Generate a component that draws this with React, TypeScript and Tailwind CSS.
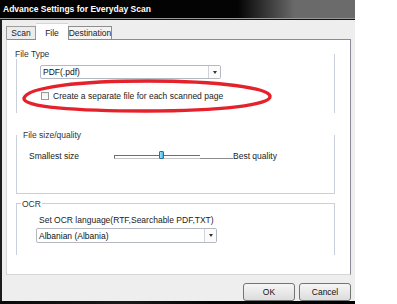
import React from "react";

const Select = ({ value, h }: { value: string; h: string }) => (
  <div
    className={`flex w-[181px] ${h} items-stretch rounded-[2px] border border-[#b4b8c0] bg-white`}
  >
    <div className="flex flex-1 items-center pl-[2px] text-[#111]">{value}</div>
    <div className="flex w-[12px] items-center justify-center border-l border-[#d0d3d8] bg-[#fbfbfb]">
      <div className="h-0 w-0 border-x-[2.5px] border-t-[3px] border-x-transparent border-t-[#333]" />
    </div>
  </div>
);

export default function App() {
  return (
    <div className="relative h-[304px] w-[397px] overflow-hidden bg-white font-['Liberation_Sans',Arial,sans-serif] text-[8.5px] leading-[10px] text-[#222]">
      <div className="flex h-[304px] w-[355px] flex-col">
        {/* title bar */}
        <div className="flex h-[18px] items-center bg-[linear-gradient(90deg,#000_0%,#040404_67%,#6a6a6a_83%,#6b6b6b_100%)] pl-[3px] font-bold text-white">
          Advance Settings for Everyday Scan
        </div>
        <div className="h-px bg-[#9a9a9a]" />
        <div className="h-px bg-[#111]" />

        {/* body */}
        <div className="flex flex-1 flex-col border-l-2 border-[#1c1c1c] bg-[#eeeeee] pl-[4px] pr-[4px]">
          {/* tabs */}
          <div className="mt-[3px] flex h-[16px] items-end">
            <div className="flex h-[13px] w-[30px] items-center justify-center border border-b-0 border-[#9c9c9c] bg-[#ececec] text-[#222]">
              Scan
            </div>
            <div className="relative z-10 -mb-px flex h-[17px] w-[32px] items-center justify-center border-t border-[#d6d6d6] bg-white pt-[1px] text-[#222]">
              File
            </div>
            <div className="flex h-[13px] w-[44px] items-center justify-center border border-b-0 border-[#8e8e8e] bg-[#f3f3f3] text-[#222]">
              Destination
            </div>
          </div>

          {/* panel */}
          <div className="h-[236px] w-[345px] border border-b-[#d6d6d6] border-l-[#d6d6d6] border-r-[#8a8a96] border-t-[#8a8a96] bg-white pl-[9px]">
            {/* File Type */}
            <div className="mt-[14px] flex h-[59px] w-[319px] flex-col border-x border-[#c9d0da]">
              <div className="-ml-[2px] -mt-[5px] h-[10px] self-start bg-white pr-[1px] text-[#333]">
                File Type
              </div>
              <div className="ml-[23px] mt-[6px]">
                <Select value="PDF(.pdf)" h="h-[14px]" />
              </div>
              <div className="ml-[24px] mt-[12px] flex h-[10px] items-center gap-[4px]">
                <div className="h-[8px] w-[8px] border border-[#9a9a9a] bg-[linear-gradient(#f0f0f0,#fff)]" />
                <span className="text-[#222]">Create a separate file for each scanned page</span>
              </div>
            </div>

            {/* File size/quality */}
            <div className="mt-[22px] flex h-[59px] w-[319px] flex-col border-x border-b border-[#c9d0da]">
              <div className="-mt-[5px] ml-[6px] h-[10px] text-[#333]">File size/quality</div>
              <div className="ml-[12px] mt-[11px] flex h-[10px] items-center">
                <span className="w-[85px]">Smallest size</span>
                <div className="relative flex h-[6px] items-end">
                  <div className="h-[4px] w-[86px] border-l border-t border-b border-l-[#707070] border-t-[#6e6e6e] border-b-[#c4c4c4]" />
                  <div className="h-px w-[33px] bg-[#8a8a8a]" />
                  <div className="absolute left-[45px] top-[-2px] h-[8px] w-[5px] rounded-[1px] border border-[#2f6f98] bg-[linear-gradient(90deg,#9fe2fa,#3fb8e8)]" />
                </div>
                <span className="text-[#222]">Best quality</span>
              </div>
            </div>

            {/* OCR */}
            <div className="mt-[9px] flex h-[52px] w-[319px] flex-col border-x border-t border-[#c9d0da]">
              <div className="-mt-[5px] ml-[4px] h-[10px] self-start bg-white px-[1px] text-[#333]">
                OCR
              </div>
              <div className="ml-[22px] mt-[6px] h-[10px] text-[#222]">
                Set OCR language(RTF,Searchable PDF,TXT)
              </div>
              <div className="ml-[19px] mt-[3px]">
                <Select value="Albanian (Albania)" h="h-[15px]" />
              </div>
            </div>
          </div>

          {/* buttons */}
          <div className="mt-[8px] flex h-[18px] justify-end gap-[4px]">
            <button className="flex h-[18px] w-[52px] items-center justify-center rounded-[3px] border border-[#747474] bg-[linear-gradient(#f6f6f6,#dcdcdc)] text-[#111]">
              OK
            </button>
            <button className="flex h-[18px] w-[52px] items-center justify-center rounded-[3px] border border-[#747474] bg-[linear-gradient(#f6f6f6,#dcdcdc)] text-[#111]">
              Cancel
            </button>
          </div>
        </div>
        <div className="h-[3px] bg-[linear-gradient(90deg,#0a0a0a_0%,#1a1a1a_35%,#050505_60%,#000_100%)]" />
      </div>

      {/* red annotation ellipse */}
      <svg
        className="absolute left-[20px] top-[77px]"
        width="255"
        height="38"
        viewBox="0 0 255 38"
        fill="none"
      >
        <path
          d="M4 21 C 8 10, 60 4, 128 4 C 200 4, 248 11, 250 19 C 252 28, 200 34, 126 34 C 56 34, 2 30, 4 21 Z"
          stroke="#e5212b"
          strokeWidth="3.5"
        />
      </svg>
    </div>
  );
}
